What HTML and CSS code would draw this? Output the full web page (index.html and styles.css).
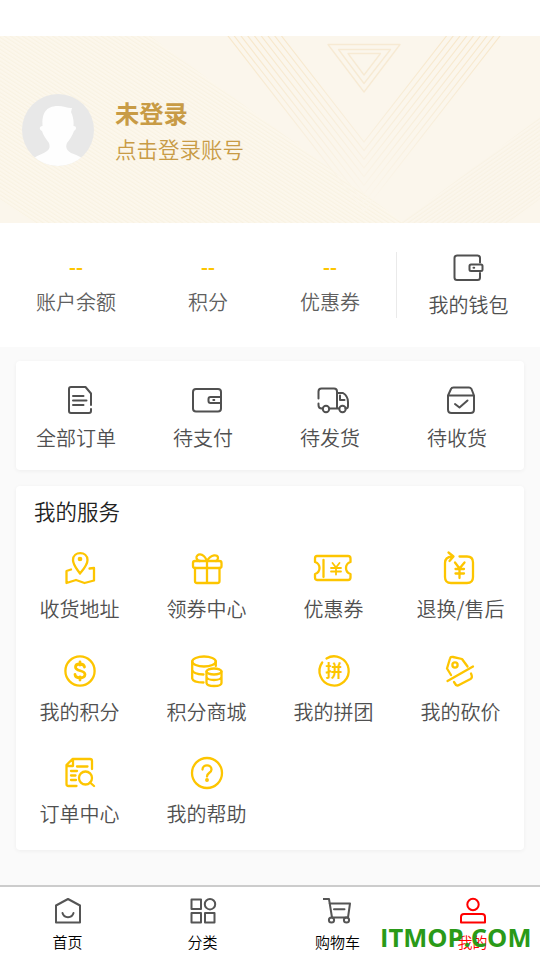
FILE: index.html
```html
<!DOCTYPE html>
<html lang="zh-CN">
<head>
<meta charset="utf-8">
<title>我的</title>
<link rel="stylesheet" href="styles.css">
</head>
<body>
<header class="hero">
  <svg class="hero-art" viewBox="0 0 540 187" fill="none">
    <defs>
      <linearGradient id="fade" gradientUnits="userSpaceOnUse" x1="0" y1="0" x2="0" y2="170">
        <stop offset="0" stop-color="#f7e7ca"/><stop offset=".5" stop-color="#f8eedb"/><stop offset="1" stop-color="#fbf6ec"/>
      </linearGradient>
      <pattern id="down" width="20" height="3.3" patternUnits="userSpaceOnUse" patternTransform="rotate(33)"><path d="M0 1H20" stroke="#f6eedb" stroke-width=".7"/></pattern>
      <pattern id="up" width="20" height="3.3" patternUnits="userSpaceOnUse" patternTransform="rotate(-35)"><path d="M0 1H20" stroke="#f6eedc" stroke-width=".7"/></pattern>
    </defs>
    <path fill="#fcf7ec" d="M0 0H150L404 187H36L0 163Z"/>
    <path fill="url(#down)" d="M0 0H150L404 187H36L0 163Z"/>
    <path fill="url(#up)" d="M540 81V163L508 187H400Z"/>
    <g id="chevrons" stroke="url(#fade)" stroke-width="1.2">
      <path d="M281.500 0L364 106L446.500 0"/><path d="M274.750 0L364 114.700L453.250 0"/><path d="M268 0L364 123.400L460 0"/>
      <path d="M261.250 0L364 132L466.750 0"/><path d="M254.500 0L364 140.700L473.500 0"/><path d="M247.750 0L364 149.300L480.250 0"/>
      <path d="M241 0L364 158L487 0"/><path d="M234.250 0L364 166.700L493.750 0"/><path d="M228 0L364 175L500 0"/>
    </g>
    <g stroke="#f7ead3" stroke-width="1.3"><path d="M328 8.500H400L364 56Z"/><path d="M338.500 13.500H390.500L364 47.500Z"/><path d="M348 17.500H380.500L364 39Z"/></g>
  </svg>
  <svg class="avatar" viewBox="0 0 72 72"><defs><clipPath id="round"><circle cx="36" cy="36" r="36"/></clipPath></defs>
    <g clip-path="url(#round)"><path fill="#e8e8e8" d="M0 0H72V72H0Z"/><path fill="#fefefe" d="M36 12C42 12 46 14.500 50 14L49 18C51 22 52 27 51.500 32C54.500 32 55 35 52 37C50 42 48 45 45 49C43 54 45 56 49 59C54 61 57 62 60 64V73H12V64C16 61 21 60 25 57C28 55 28 52 27 49C24 45 21 41 20 37C17 36 17 32 20.500 32C20 22 22 12 36 12Z"/></g></svg>
  <div class="who"><h1>未登录</h1><p>点击登录账号</p></div>
</header>

<section class="assets">
  <div class="stats">
    <div class="stat"><b>--</b><span>账户余额</span></div>
    <div class="stat"><b>--</b><span>积分</span></div>
    <div class="stat"><b>--</b><span>优惠券</span></div>
  </div>
  <div class="wallet">
    <svg class="ico" viewBox="0 0 36 36"><path d="M29 12.500V8Q29 5.500 26.500 5.500H6Q3.500 5.500 3.500 8V27.500Q3.500 30 6 30H26.500Q29 30 29 27.500V23"/><rect x="18.500" y="14.500" width="13" height="6.500" rx="1.500"/><path d="M22.500 17.700H23.200"/></svg>
    <span>我的钱包</span>
  </div>
</section>

<section class="card orders">
  <div class="cell"><svg class="ico" viewBox="0 0 36 36"><path d="M29 23V11.500L23.500 5H9Q7 5 7 7V29Q7 31 9 31H27Q29 31 29 29V27M11 14H21.500M11 18.500H24.500M11 23H21.500"/></svg><span>全部订单</span></div>
  <div class="cell"><svg class="ico" viewBox="0 0 36 36"><rect x="4" y="7" width="28" height="22.500" rx="3"/><path d="M32 15H21.500Q19.500 15 19.500 17V19Q19.500 21 21.500 21H32M24.300 18H25.300"/></svg><span>待支付</span></div>
  <div class="cell"><svg class="ico truck" viewBox="0 0 36 36"><path d="M2.500 16.500V9.500Q2.500 6.500 5.500 6.500H18Q21 6.500 21 9.500V26.500M2.500 21.500V23Q2.500 26.500 6 26.500M13.500 26.500H22.500M21 11H27Q32 14 32 20V24Q32 26.500 29.500 26.500M24 13.500V18H28.500"/><circle cx="10" cy="27" r="3.200"/><circle cx="26.500" cy="27" r="3.200"/></svg><span>待发货</span></div>
  <div class="cell"><svg class="ico" viewBox="0 0 36 36"><path d="M5 13.500L8 7Q8.500 5.500 10.500 5.500H26Q27.500 5.500 28.500 7L31 13.500V27.500Q31 31 27.500 31H8.500Q5 31 5 27.500ZM5 13.500H31M12 22L16.500 25.500L24.500 18.500"/></svg><span>待收货</span></div>
</section>

<section class="card services">
  <h2>我的服务</h2>
  <div class="grid">
    <div class="cell"><svg class="ico" viewBox="0 0 36 36"><path d="M18 23.500C14.500 18.500 11 15 11 10C11 0.800 25.500 0.800 25.500 10C25.500 15 22 18.500 18 23.500Z"/><circle cx="18" cy="9" r="1.200" fill="currentColor"/><path d="M9 19.500L4.500 21V33L14 30L22.500 33L32 30.500V18L27.500 18.500"/></svg><span>收货地址</span></div>
    <div class="cell"><svg class="ico" viewBox="0 0 36 36"><rect x="4" y="11" width="28.500" height="7" rx="2"/><path d="M6 18V31Q6 33 8 33H28.500Q30.500 33 30.500 31V18M18 11V33M18 11C14 1.500 7 4 7.500 8C8 10 9.500 11 11 11M18 11C22 4 29 4 29 8Q29 10 27 11"/></svg><span>领券中心</span></div>
    <div class="cell"><svg class="ico wide" viewBox="0 0 42 36"><path d="M5 6H36Q38.500 6 38.500 8.500V12C32.500 14 32.500 22 38.500 24V27.500Q38.500 30 36 30H5Q3 30 3 27.500V24C9 22 9 14 3 12V8.500Q3 6 5 6ZM11.500 10V27"/><path class="fine" d="M20.500 13L24 17.500L27.500 13M19 18H29M19 21.500H29M24 18V24.500"/></svg><span>优惠券</span></div>
    <div class="cell"><svg class="ico" viewBox="0 0 36 36"><path d="M18.500 6.500H26Q32 6.500 32 12.500V27Q32 33 26 33H10Q4 33 4 27V13Q4 7 11 6.500M7.500 2.500L12.500 6.500L8.500 11M14 12.500L18.500 18.500L23.500 12.500M14.500 19H23M14.500 23.500H23M18.500 19V28"/></svg><span>退换/售后</span></div>
    <div class="cell"><svg class="ico" viewBox="0 0 36 36"><circle cx="18" cy="18" r="14.600"/><path class="heavy" d="M22.500 14C22 10 13.500 10 13.500 14C13.500 19 23 16.500 23 21.500C23 26 13.500 26 13 21.500M18 9V12M18 24V27"/></svg><span>我的积分</span></div>
    <div class="cell"><svg class="ico" viewBox="0 0 36 36"><ellipse cx="15" cy="8.500" rx="11.800" ry="5"/><path d="M3.200 8.500V25.500Q4 29.500 14.500 29.500M3.200 17Q4 21 14.500 21.500M26.800 8.500V13"/><ellipse cx="25" cy="18.500" rx="7.500" ry="3"/><path d="M17.500 18.500V30Q18 33 25 33Q32.500 33 32.500 30V18.500M17.500 24Q18.500 27 25 27Q31.500 27 32.500 24"/></svg><span>积分商城</span></div>
    <div class="cell"><svg class="ico" viewBox="0 0 36 36"><path d="M10.500 5.500A14.600 14.600 0 1 1 6.200 9.500"/><text x="18" y="24.200">拼</text></svg><span>我的拼团</span></div>
    <div class="cell"><svg class="ico" viewBox="0 0 36 36"><path d="M10 22L6 15.500L9 5.500Q9.500 3.500 12 4L21 6L26.500 13.500M6.500 28L32 13.500M13 29L15 32Q16.500 33 18 32L29.500 26Q32 24.500 30 20.500"/><circle cx="14" cy="12" r="2.600"/></svg><span>我的砍价</span></div>
    <div class="cell"><svg class="ico" viewBox="0 0 36 36"><path d="M14.500 31H6.500Q4.500 31 4.500 29V10L10.500 4H28Q30 4 30 6V14M11 5V11H5M15 11.500H25.500M9 16H15M9 20.500H13.500M9 25H14M28 27.500L32 31"/><circle cx="23.500" cy="23" r="6.500"/></svg><span>订单中心</span></div>
    <div class="cell"><svg class="ico" viewBox="0 0 36 36"><circle cx="18" cy="18" r="15"/><path d="M13.500 14.500C13.500 9 22.500 9 22.500 14.500C22.500 18 18 17.500 18 21.500"/><circle cx="18" cy="25" r=".8" fill="currentColor"/></svg><span>我的帮助</span></div>
  </div>
</section>

<nav class="tabs">
  <a class="tab"><svg viewBox="0 0 30 30"><path d="M3 9.500L15 3L27 9.500V26.500H3ZM9.500 17C11 22.500 19 22.500 20.500 17"/></svg><span>首页</span></a>
  <a class="tab"><svg viewBox="0 0 30 30"><rect x="3.500" y="3.500" width="9.500" height="9.500"/><circle cx="22" cy="8.200" r="5.200"/><rect x="3.500" y="17" width="9.500" height="9.500"/><rect x="17" y="17" width="9.500" height="9.500"/></svg><span>分类</span></a>
  <a class="tab"><svg viewBox="0 0 30 30"><path d="M.5 3H6L9 21.500H25L27 7.500H6.500M11 13.200H21.500"/><circle cx="8.500" cy="24" r="2.600"/><circle cx="23.500" cy="24" r="2.600"/></svg><span>购物车</span></a>
  <a class="tab active"><svg viewBox="0 0 30 30"><circle cx="15" cy="8.500" r="5.700"/><path d="M3 26.500V21Q3 18 6 18H24Q27 18 27 21V26.500Z"/></svg><span>我的</span></a>
  <div class="watermark">ITMOP.COM</div>
</nav>
</body>
</html>
```
FILE: styles.css
```css
* { box-sizing: border-box; margin: 0; padding: 0; }
body {
  height: 960px;
  padding-top: 36px;
  display: flex;
  flex-direction: column;
  overflow: hidden;
  background: #fafafa linear-gradient(#fff, #fff) top / 100% 36px no-repeat;
  font: 350 20px/28px "Noto Sans CJK SC", sans-serif;
  color: #505050;
}
svg { display: block; fill: none; stroke: currentColor; stroke-width: 2; stroke-linecap: round; stroke-linejoin: round; }
.hero { position: relative; height: 187px; flex: none; display: flex; padding: 58px 22px; background: #fbf6ec; }
.hero-art { position: absolute; inset: 0; width: 540px; height: 187px; stroke: none; }
.avatar { position: relative; width: 72px; height: 72px; stroke: none; }
.who { position: relative; margin: -1px 0 0 21px; color: #c89b45; }
.who h1 { font-size: 24.3px; line-height: 40px; font-weight: 700; }
.who p { font-size: 21.5px; line-height: 32px; }
.assets { height: 124px; flex: none; display: flex; background: #fff; }
.stats { width: 397px; display: flex; justify-content: space-around; position: relative; padding-right: 1px; }
.stats::after { content: ""; position: absolute; right: 0; top: 29px; width: 1px; height: 66px; background: #eaeaea; }
.stat { display: flex; flex-direction: column; align-items: center; padding-top: 30px; color: #606060; }
.stat b { height: 35px; font: 500 21.5px/27px "Noto Sans", sans-serif; color: #fdc500; }
.wallet { flex: 1; display: flex; flex-direction: column; align-items: center; padding-top: 27px; }
.ico { width: 36px; height: 36px; }
.wallet span { margin-top: 5px; }
.card { flex: none; margin: 14px 16px 0; background: #fff; border-radius: 4px; box-shadow: 0 1px 4px rgba(0,0,0,.05); }
.orders { height: 109px; padding-top: 21px; display: grid; grid-template-columns: repeat(4, 1fr); }
.cell { display: flex; flex-direction: column; align-items: center; white-space: nowrap; }
.orders .cell span { margin: 6px 7px 0 0; }
.services { height: 364px; margin-top: 16px; }
.services h2 { font-size: 21.5px; line-height: 30px; font-weight: inherit; color: #222; padding: 10px 18px 0; height: 65px; }
.grid { display: grid; grid-template-columns: repeat(4, 1fr); grid-auto-rows: 102.500px; }
.services .ico { color: #fdc500; stroke-width: 2.3; margin: -1px 0 9px 0; }
.services .wide { width: 42px; margin-right: 2px; }
.services .cell:nth-child(4n) .ico { margin-right: 3px; }
.services .heavy { stroke-width: 2.8; }
.services .fine { stroke-width: 1.8; }
.ico text { font-size: 17px; font-weight: 700; text-anchor: middle; fill: currentColor; stroke: none; }
.tabs { position: relative; flex: none; margin-top: 35px; height: 75px; display: flex; border-top: 2px solid #ccc; background: #fff; color: #000; font-size: 15px; line-height: 22px; }
.tab { flex: 1; display: flex; flex-direction: column; align-items: center; padding-top: 9px; }
.tab svg { width: 30px; height: 30px; color: #555; margin-bottom: 5px; }
.active, .tab.active svg { color: #f00; }
.watermark { position: absolute; left: 380px; top: 32px; font: 700 25.5px/36px "Open Sans", sans-serif; color: #2a9a18; }
```
